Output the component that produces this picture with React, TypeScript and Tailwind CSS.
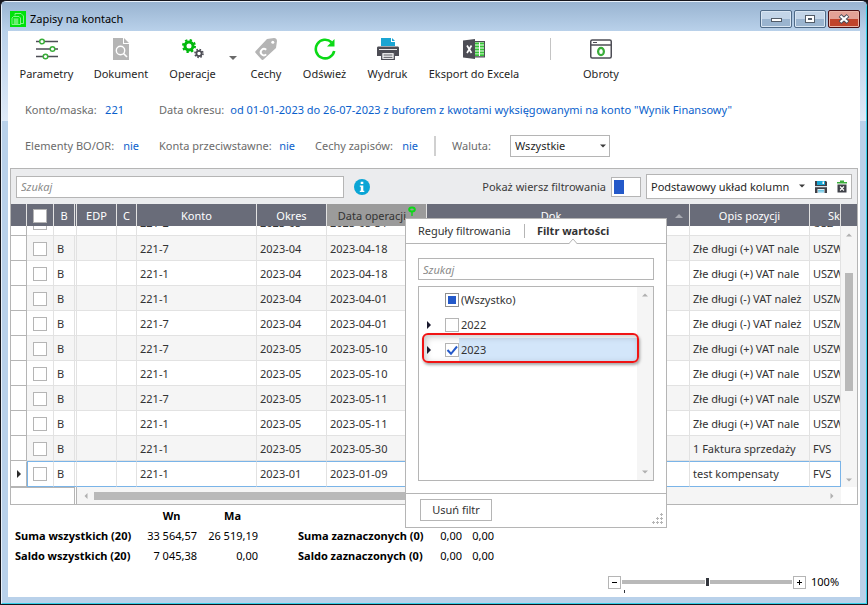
import { useState } from 'react'
import type { ReactNode } from 'react'
import clsx from 'clsx'

type Row = {
  konto: string
  okres: string
  data: string
  opis: string
  sk: string
}

const VAT_PLUS = 'Złe długi (+) VAT nale'
const VAT_MINUS = 'Złe długi (-) VAT należ'

const rows: Row[] = [
  { konto: '221-7', okres: '2023-04', data: '2023-04-18', opis: VAT_PLUS, sk: 'USZW' },
  { konto: '221-1', okres: '2023-04', data: '2023-04-18', opis: VAT_PLUS, sk: 'USZW' },
  { konto: '221-1', okres: '2023-04', data: '2023-04-01', opis: VAT_MINUS, sk: 'USZM' },
  { konto: '221-7', okres: '2023-04', data: '2023-04-01', opis: VAT_MINUS, sk: 'USZM' },
  { konto: '221-7', okres: '2023-05', data: '2023-05-10', opis: VAT_PLUS, sk: 'USZW' },
  { konto: '221-1', okres: '2023-05', data: '2023-05-10', opis: VAT_PLUS, sk: 'USZW' },
  { konto: '221-7', okres: '2023-05', data: '2023-05-11', opis: VAT_PLUS, sk: 'USZW' },
  { konto: '221-1', okres: '2023-05', data: '2023-05-11', opis: VAT_PLUS, sk: 'USZW' },
  { konto: '221-1', okres: '2023-05', data: '2023-05-30', opis: '1 Faktura sprzedaży', sk: 'FVS' },
  { konto: '221-1', okres: '2023-01', data: '2023-01-09', opis: 'test kompensaty', sk: 'FVS' },
]

function Arrow({ dir, className }: { dir: 'up' | 'down' | 'left' | 'right'; className?: string }) {
  const d = {
    up: 'M0 6 L4 2 L8 6Z',
    down: 'M0 2 L8 2 L4 6Z',
    left: 'M6 0 L6 8 L2 4Z',
    right: 'M2 0 L6 4 L2 8Z',
  }[dir]
  return (
    <svg viewBox="0 0 8 8" className={clsx('shrink-0', className)} fill="currentColor" aria-hidden="true">
      <path d={d} />
    </svg>
  )
}

function LogoIcon() {
  return (
    <svg viewBox="0 0 16 16" className="w-4 h-4 shrink-0" aria-hidden="true">
      <rect width="16" height="16" fill="#00e10b" />
      <g fill="none" stroke="#a5f7a8" strokeWidth="0.8">
        <path d="M5 4.5V2.5h6l2.5 2.5v7.5h-3" />
        <path d="M2 7l1.5-1.5H9L10.5 7v6.5H2z" />
        <path d="M3.5 8h5M3.5 10h5M3.5 12h5M5 8v5M7 8v5" />
      </g>
    </svg>
  )
}

function SlidersIcon() {
  return (
    <svg viewBox="0 0 22 22" className="w-[22px] h-[22px]" fill="none" aria-hidden="true">
      <path d="M0 3.5h22M0 11h22M0 18.5h22" stroke="#4d4d55" strokeWidth="1.4" />
      <g fill="#fff" stroke="#3aad3a" strokeWidth="1.5">
        <circle cx="6" cy="3.5" r="2.3" />
        <circle cx="16.5" cy="11" r="2.3" />
        <circle cx="9.5" cy="18.5" r="2.3" />
      </g>
    </svg>
  )
}

function DocumentIcon() {
  return (
    <svg viewBox="0 0 22 22" className="w-[22px] h-[22px]" aria-hidden="true">
      <path d="M3 0h10v6h6v16H3z" fill="#b5b5b5" />
      <path d="M14 0l5 5h-5z" fill="#b5b5b5" />
      <circle cx="10.5" cy="12.5" r="4.2" fill="none" stroke="#fff" strokeWidth="1.4" />
      <path d="M13.5 15.5l3.5 3.5" stroke="#fff" strokeWidth="1.6" />
    </svg>
  )
}

function GearsIcon() {
  return (
    <svg viewBox="0 0 22 22" className="w-[22px] h-[22px]" fill="none" aria-hidden="true">
      <circle cx="7" cy="8" r="4" stroke="#00b80c" strokeWidth="3" />
      <circle cx="7" cy="8" r="5.9" stroke="#00b80c" strokeWidth="2.2" strokeDasharray="2.3 2.33" />
      <circle cx="17" cy="15.5" r="2.6" stroke="#4d4d55" strokeWidth="1.8" />
      <circle cx="17" cy="15.5" r="4" stroke="#4d4d55" strokeWidth="1.6" strokeDasharray="1.57 1.57" />
    </svg>
  )
}

function TagIcon() {
  return (
    <svg viewBox="0 0 22 22" className="w-[22px] h-[22px]" aria-hidden="true">
      <path d="M12 1l7-1c1.8 0 3 1.2 3 3l-1 7L8.5 21.5c-.7.7-1.3.7-2 0L.7 15c-.7-.7-.7-1.3 0-2z" fill="#b5b5b5" />
      <circle cx="17.8" cy="4.2" r="1.5" fill="#fff" />
      <path d="M11.2 11.8a3.2 3.2 0 1 0 0 4.6" fill="none" stroke="#fff" strokeWidth="1.9" />
    </svg>
  )
}

function RefreshIcon() {
  return (
    <svg viewBox="0 0 22 22" className="w-[22px] h-[22px]" fill="none" aria-hidden="true">
      <path d="M17.5 4.3A9.3 9.3 0 1 0 20.2 13" stroke="#0bd916" strokeWidth="2.6" />
      <path d="M20.500 1v7.500h-7.500z" fill="#0bd916" />
    </svg>
  )
}

function PrinterIcon() {
  return (
    <svg viewBox="0 0 22 22" className="w-[22px] h-[22px]" aria-hidden="true">
      <path d="M4 0h10v4h4v4H4z" fill="#1aa5d3" />
      <path d="M15 0l3 3h-3z" fill="#1aa5d3" />
      <path d="M1.5 8.5h19c1 0 1.5.5 1.5 1.5v8h-4v-4H4v4H0v-8c0-1 .5-1.5 1.5-1.5z" fill="#4d4d55" />
      <path d="M2 11.5h18" stroke="#fff" strokeWidth="0.9" />
      <rect x="4.7" y="14.5" width="12.6" height="7" fill="#fff" stroke="#4d4d55" strokeWidth="1.3" />
      <path d="M6.5 17h9M6.5 19.3h9" stroke="#4d4d55" />
    </svg>
  )
}

function ExcelIcon() {
  return (
    <svg viewBox="0 0 22 22" className="w-[22px] h-[22px]" aria-hidden="true">
      <rect x="11" y="3" width="11" height="16.5" fill="#4d4d55" />
      <rect x="12" y="4.2" width="9" height="14" fill="#fff" />
      <path
        d="M12 4.500h4v2h-4zM17 4.500h4v2h-4zM12 7.500h4v2h-4zM17 7.500h4v2h-4zM12 10.500h4v2h-4zM17 10.500h4v2h-4zM12 13.500h4v2h-4zM17 13.500h4v2h-4zM12 16.300h4v1.700h-4zM17 16.300h4v1.700h-4z"
        fill="#35c435"
      />
      <path d="M0 2.5L12 1v20L0 19.5z" fill="#4d4d55" />
      <path d="M4 7.5l4.5 7.5M8.500 7.500L4 15" stroke="#fff" strokeWidth="1.7" />
    </svg>
  )
}

function TurnoverIcon() {
  return (
    <svg viewBox="0 0 22 22" className="w-[22px] h-[22px]" fill="none" aria-hidden="true">
      <rect x="0.75" y="2" width="20.5" height="18" rx="1.5" stroke="#4d4d55" strokeWidth="1.5" />
      <path d="M1 7h20" stroke="#4d4d55" strokeWidth="1.3" />
      <path d="M3 4.5h4" stroke="#4d4d55" strokeWidth="1.2" />
      <ellipse cx="11" cy="13.5" rx="2.9" ry="3.6" stroke="#3aad3a" strokeWidth="2.2" />
    </svg>
  )
}

function SaveIcon() {
  return (
    <svg viewBox="0 0 12 12" className="w-3 h-3" aria-hidden="true">
      <path d="M0 0h11l1 1v11H0z" fill="#3f4148" />
      <path d="M2 0h8v4H2z" fill="#1aa5d3" />
      <path d="M7.5 0.500h1.500v2.500H7.500z" fill="#fff" />
      <path d="M0 5h12v1.300H0z" fill="#dfe5ea" />
      <path d="M2.500 8h7v4h-7z" fill="#fff" />
      <path d="M3 9.300h6M3 10.900h6" stroke="#1aa5d3" strokeWidth="0.8" />
    </svg>
  )
}

function TrashIcon() {
  return (
    <svg viewBox="0 0 10 13" className="w-2.5 h-[13px]" aria-hidden="true">
      <path d="M0 3.500V2h3V0.500h4V2h3v1.500z" fill="#3aad3a" />
      <path d="M0.500 4.500h9V12.500h-9z" fill="#3f4148" />
      <path d="M3 6.500l4 4M7 6.500l-4 4" stroke="#fff" strokeWidth="1.1" />
    </svg>
  )
}

function ToolButton({ label, width, children }: { label: string; width: string; children: ReactNode }) {
  return (
    <button className={clsx('flex flex-col items-center gap-1.5 whitespace-nowrap', width)}>
      {children}
      <span>{label}</span>
    </button>
  )
}

function Param({ label, value, className }: { label: string; value: string; className?: string }) {
  return (
    <div className={clsx('flex justify-between whitespace-nowrap', className)}>
      <span className="text-[#6b6b6b]">{label}</span>
      <a href="#" className="text-[#0a5fcc]">{value}</a>
    </div>
  )
}

function Titlebar() {
  const glass =
    'flex items-center justify-center w-8 h-[18px] rounded-xs border border-[#4f6a87] bg-linear-to-b from-[#c3d5e8] from-50% to-[#9ab4cf] to-50% inset-ring inset-ring-[#d9e6f3]'
  return (
    <header className="flex items-center gap-1 h-[29px] pl-2 pr-0.5 pt-1 bg-linear-to-b from-[#99b4d1] to-[#b9d1ea]">
      <LogoIcon />
      <h1 className="flex-1 text-black">Zapisy na kontach</h1>
      <div className="flex gap-0.5 mr-1">
        <button aria-label="Minimalizuj" className={glass}>
          <span className="w-[11px] h-1 mt-0.5 border border-[#525c68] bg-white" />
        </button>
        <button aria-label="Maksymalizuj" className={glass}>
          <span className="flex items-center justify-center w-2.5 h-2 border border-[#525c68] bg-white">
            <span className="w-1 h-0.5 border border-[#525c68]" />
          </span>
        </button>
        <button
          aria-label="Zamknij"
          className="flex items-center justify-center w-8 h-[18px] rounded-xs border border-[#4b1015] bg-linear-to-b from-[#e3a196] from-50% to-[#c0442c] to-50% inset-ring inset-ring-[#eab5a8]"
        >
          <svg viewBox="0 0 12 10" className="w-3 h-2.5" aria-hidden="true">
            <path d="M2 1.500l8 7M10 1.500l-8 7" stroke="#4a4f5c" strokeWidth="4" />
            <path d="M2.500 2l7 6M9.500 2l-7 6" stroke="#fff" strokeWidth="2.2" />
          </svg>
        </button>
      </div>
    </header>
  )
}

function Toolbar() {
  return (
    <nav className="flex items-start gap-5 pl-3 pt-[7px] text-[#1f1f1f]">
      <ToolButton label="Parametry" width="w-[53px]"><SlidersIcon /></ToolButton>
      <ToolButton label="Dokument" width="w-14"><DocumentIcon /></ToolButton>
      <div className="flex">
        <ToolButton label="Operacje" width="w-[47px]"><GearsIcon /></ToolButton>
        <button aria-label="Więcej operacji" className="w-[14px] ml-2.5 -mr-2.5 pt-4 flex justify-center text-[#6a6a6a]">
          <Arrow dir="down" className="w-2 h-2" />
        </button>
      </div>
      <ToolButton label="Cechy" width="w-8"><TagIcon /></ToolButton>
      <ToolButton label="Odśwież" width="w-[45px]"><RefreshIcon /></ToolButton>
      <ToolButton label="Wydruk" width="w-[41px]"><PrinterIcon /></ToolButton>
      <ToolButton label="Eksport do Excela" width="w-[92px]"><ExcelIcon /></ToolButton>
      <div className="w-px h-[22px] mx-2.5 bg-[#c4c4c4]" />
      <ToolButton label="Obroty" width="w-10"><TurnoverIcon /></ToolButton>
    </nav>
  )
}

function Params() {
  return (
    <div className="flex flex-col gap-4 pl-[17px] pt-[18px] pb-3">
      <div className="flex items-center gap-[35px] h-5">
        <Param label="Konto/maska:" value="221" className="w-[99px]" />
        <Param
          label="Data okresu:"
          value={'od 01-01-2023 do 26-07-2023 z buforem z kwotami wyksięgowanymi na konto "Wynik Finansowy"'}
          className="gap-1.5"
        />
      </div>
      <div className="flex items-center h-5">
        <Param label="Elementy BO/OR:" value="nie" className="w-[114px] mr-5" />
        <Param label="Konta przeciwstawne:" value="nie" className="w-[136px] mr-5" />
        <Param label="Cechy zapisów:" value="nie" className="w-[103px]" />
        <div className="w-0.5 h-5 mx-4 bg-[#d0d0d0]" />
        <label htmlFor="waluta" className="w-[58px] text-[#6b6b6b]">Waluta:</label>
        <div className="relative">
          <select id="waluta" className="w-[100px] h-[22px] pl-1 appearance-none border border-[#b5b5b5] bg-white text-[#1f1f1f]">
            <option>Wszystkie</option>
          </select>
          <Arrow dir="down" className="absolute right-1 top-2 w-1.5 h-1.5 pointer-events-none text-[#3b3b3b]" />
        </div>
      </div>
    </div>
  )
}

function GridSearch() {
  return (
    <div className="flex items-center h-[35px] px-[5px] bg-[#ebecee]">
      <input
        type="search"
        aria-label="Szukaj"
        placeholder="Szukaj"
        className="w-[328px] h-[22px] px-1 border border-[#b5b5b5] bg-white italic placeholder:text-[#8a8a8a]"
      />
      <button aria-label="Informacje" className="ml-2.5">
        <svg viewBox="0 0 16 16" className="w-4 h-4" aria-hidden="true">
          <circle cx="8" cy="8" r="8" fill="#0aa5d5" />
          <path d="M6.700 2.800h2.600v2.200H6.700zM5.800 6.500h3.500v5.200h1V13H5.800v-1.300h1V7.800h-1z" fill="#fff" />
        </svg>
      </button>
      <div className="flex items-center gap-[5px] ml-auto">
        <label htmlFor="filter-row" className="text-[#3b3b3b]">Pokaż wiersz filtrowania</label>
        <input
          id="filter-row"
          type="checkbox"
          role="switch"
          className="w-[30px] h-5 p-0.5 appearance-none border border-[#b5b5b5] bg-white bg-linear-to-r from-[#2459c9] from-40% to-white to-40% bg-clip-content bg-origin-content inset-ring-2 inset-ring-white"
        />
        <div className="flex items-center w-[206px] h-[25px] border border-[#b5b5b5] bg-white">
          <div className="relative flex-1">
            <select aria-label="Układ kolumn" className="w-full h-5 pl-1 appearance-none text-[#1f1f1f]">
              <option>Podstawowy układ kolumn</option>
            </select>
            <Arrow dir="down" className="absolute right-1 top-1.5 w-1.5 h-1.5 pointer-events-none text-[#3b3b3b]" />
          </div>
          <button aria-label="Zapisz układ" className="ml-1.5"><SaveIcon /></button>
          <button aria-label="Usuń układ" className="ml-2.5 mr-1"><TrashIcon /></button>
        </div>
      </div>
    </div>
  )
}

const box = 'block appearance-none border border-[#b5b5b5] bg-white'

// The row scrolled halfway under the header, only its lower edge shows
function ClippedCell({ children, className }: { children?: ReactNode; className?: string }) {
  return (
    <td className="h-[10px] p-0 border-r border-b border-[#e2e2e2]">
      <div className={clsx('flex items-end h-[9px] overflow-hidden', className)}>{children}</div>
    </td>
  )
}

function EntriesTable() {
  return (
    <table className="table-fixed border-separate border-spacing-0 whitespace-nowrap w-full">
      <colgroup>
        <col className="w-4" />
        <col className="w-[27px]" />
        <col className="w-[23px]" />
        <col className="w-10" />
        <col className="w-5" />
        <col className="w-[120px]" />
        <col className="w-[70px]" />
        <col className="w-[100px]" />
        <col />
        <col className="w-[120px]" />
        <col className="w-[31px]" />
      </colgroup>
      <thead>
        <tr className="bg-[#696c79] text-white *:h-[22px] *:p-0 *:pt-0.5 *:font-normal *:border-r *:border-[#e2e2e2] *:overflow-hidden">
          <th />
          <th><input type="checkbox" aria-label="Zaznacz wszystkie" className={clsx(box, 'w-3.5 h-3.5 mx-auto')} /></th>
          <th className="pt-0!"><div className="h-[22px] pt-px leading-[22px] border-r border-[#e2e2e2] mr-px">B</div></th>
          <th>EDP</th>
          <th>C</th>
          <th>Konto</th>
          <th>Okres</th>
          <th className="bg-[#9b9b9b] text-[#333333] pt-0!">
            <div className="flex h-[22px] justify-end gap-0.5 pr-2.5">
              <span className="pt-1">Data operacji</span>
              <svg viewBox="0 0 8 10" className="w-2 h-2.5 mt-0.5" aria-hidden="true">
                <ellipse cx="4" cy="3.5" rx="2.800" ry="2" fill="none" stroke="#0bd916" strokeWidth="2" />
                <path d="M4 5v5" stroke="#0bd916" strokeWidth="1.4" />
              </svg>
            </div>
          </th>
          <th>
            <div className="flex items-center pr-1.5">
              <span className="flex-1">Dok</span>
              <Arrow dir="up" className="w-2 h-2 text-[#a9abb3]" />
            </div>
          </th>
          <th>Opis pozycji</th>
          <th className="text-right">Sk</th>
        </tr>
      </thead>
      <tbody className="text-[#333333]">
        <tr>
          <td className="h-[10px] p-0 border-r border-b border-[#b5b5b5]" />
          <ClippedCell className="pl-1.5 pb-[5px]"><span className="w-3.5 h-3.5 border border-[#b5b5b5] shrink-0" /></ClippedCell>
          <ClippedCell className="pl-[3px] pb-1.5">B</ClippedCell>
          <ClippedCell />
          <ClippedCell />
          <ClippedCell className="pl-[3px] pb-1">221-2</ClippedCell>
          <ClippedCell className="pl-[3px] pb-1">2023-05</ClippedCell>
          <ClippedCell className="pl-[3px] pb-1">2023-05-31</ClippedCell>
          <ClippedCell />
          <ClippedCell />
          <ClippedCell className="pl-[3px] pb-1">USZ</ClippedCell>
        </tr>
        {rows.map((row, i) => {
          const current = i === rows.length - 1
          return (
            <tr
              key={i}
              className={clsx(
                '*:h-[25px] *:py-0 *:px-[3px] *:border-r *:border-b *:overflow-hidden *:border-r-[#e2e2e2]',
                current
                  ? 'bg-white *:border-t *:border-t-[#7ab4e8] *:border-b-[#7ab4e8] *:last:border-r-[#7ab4e8] *:nth-2:border-l *:nth-2:border-l-[#7ab4e8]'
                  : '*:pt-0.5 *:border-b-[#e2e2e2]',
                !current && i % 2 === 0 && 'bg-[#f5f5f5]',
              )}
            >
              <td className="bg-white border-t-transparent! border-[#b5b5b5]!">
                {current && <Arrow dir="right" className="w-2 h-2 ml-px text-[#2a2a2a]" />}
              </td>
              <td>
                <input
                  type="checkbox"
                  aria-label={`Zaznacz ${row.konto} ${row.data}`}
                  className={clsx(box, 'w-3.5 h-3.5', current ? 'ml-0.5' : 'ml-[3px]')}
                />
              </td>
              <td className="pt-0!">
                <div className={clsx('h-6 border-r border-[#e2e2e2] -mr-0.5', current ? 'leading-6' : 'leading-[26px]')}>B</div>
              </td>
              <td />
              <td />
              <td>{row.konto}</td>
              <td>{row.okres}</td>
              <td>{row.data}</td>
              <td />
              <td>{row.opis}</td>
              <td>{row.sk}</td>
            </tr>
          )
        })}
      </tbody>
    </table>
  )
}

function FilterPopup() {
  return (
    <div
      role="dialog"
      aria-label="Filtr kolumny"
      className="absolute left-[394px] top-[49px] w-[262px] border border-[#b5b5b5] bg-white text-[#333333]"
    >
      <div className="relative flex items-center h-[25px] pl-3 border-b border-[#b5b5b5] whitespace-nowrap">
        <button className="w-[95px] text-left">Reguły filtrowania</button>
        <div className="w-px h-3.5 ml-[11px] mr-3 bg-[#b5b5b5]" />
        <button className="font-bold">Filtr wartości</button>
        <svg viewBox="0 0 8 6" className="absolute left-[163px] -bottom-px w-2 h-1.5" aria-hidden="true">
          <path d="M0 6l4-5 4 5z" fill="#fff" />
          <path d="M0 5.500l4-4.500 4 4.500" fill="none" stroke="#b5b5b5" />
        </svg>
      </div>
      <div className="flex flex-col gap-1.5 px-3 pt-3.5 pb-3">
        <input
          type="search"
          aria-label="Szukaj wartości"
          placeholder="Szukaj"
          className="w-full h-[22px] px-1 border border-[#b5b5b5] italic placeholder:text-[#8a8a8a]"
        />
        <div className="flex h-[195px] border border-[#b5b5b5]">
          <ul className="flex-1">
            <li className="flex items-center h-[25px] pl-[26px] gap-0.5">
              <button
                id="all"
                role="checkbox"
                aria-checked="mixed"
                aria-label="Wszystko"
                className="w-3.5 h-3.5 border border-[#8f8f8f] bg-[#2459c9] inset-ring-2 inset-ring-white"
              />
              <label htmlFor="all">(Wszystko)</label>
            </li>
            <li className="flex items-center h-[25px] pl-1.5">
              <button aria-label="Rozwiń 2022" className="w-5 text-[#1a1a2e]"><Arrow dir="right" className="w-2 h-2" /></button>
              <input id="y2022" type="checkbox" className={clsx(box, 'w-3.5 h-3.5 mr-0.5')} />
              <label htmlFor="y2022">2022</label>
            </li>
            <li className="relative flex items-center h-[25px] pl-1.5">
              <button aria-label="Rozwiń 2023" className="w-5 text-[#1a1a2e]"><Arrow dir="right" className="w-2 h-2" /></button>
              <span className="relative">
                <input id="y2023" type="checkbox" defaultChecked className={clsx(box, 'w-3.5 h-3.5')} />
                <svg viewBox="0 0 14 14" className="absolute inset-0 w-3.5 h-3.5 pointer-events-none" aria-hidden="true">
                  <path d="M2.500 7l3.500 3.800 6-7.300" fill="none" stroke="#2459c9" strokeWidth="2" />
                </svg>
              </span>
              <label htmlFor="y2023" className="flex-1 h-6 pl-0.5 leading-6 bg-[#d3e6fa]">2023</label>
              <span className="absolute left-[3px] -right-0.5 -top-1 -bottom-px border-2 border-[#f01414] rounded-md shadow-[1px_2px_3px_rgba(0,0,0,0.35),inset_2px_2px_6px_rgba(0,0,0,0.22)] pointer-events-none" />
            </li>
          </ul>
          <div className="flex flex-col items-center justify-between w-4 py-1 bg-[#f5f5f5] text-[#b0b0b0]">
            <Arrow dir="up" className="w-1.5 h-1.5 mt-px" />
            <Arrow dir="down" className="w-1.5 h-1.5 mb-px" />
          </div>
        </div>
      </div>
      <div className="flex items-start justify-between h-[34px] pl-3.5 pt-[5px] border-t border-[#b5b5b5]">
        <button className="w-[72px] h-[22px] border border-[#b5b5b5]">Usuń filtr</button>
        <svg viewBox="0 0 12 12" className="w-3 h-3 self-end mr-0.5 mb-0.5" fill="#b5b5b5" aria-hidden="true">
          <path d="M8 1h3v1H8zM9 0h1v3H9zM8 5h3v1H8zM9 4h1v3H9zM4 5h3v1H4zM5 4h1v3H5zM8 9h3v1H8zM9 8h1v3H9zM4 9h3v1H4zM5 8h1v3H5zM0 9h3v1H0zM1 8h1v3H1z" />
        </svg>
      </div>
    </div>
  )
}

function Grid() {
  return (
    <section className="relative mx-0.5 border border-[#b5b5b5]">
      <GridSearch />
      <div className="flex">
        <div className="flex-1 min-w-0"><EntriesTable /></div>
        <div className="flex flex-col w-4">
          <div className="h-[22px] bg-[#696c79]" />
          <div className="flex flex-1 flex-col items-center pt-1.5 pb-1 bg-[#f5f5f5] text-[#b0b0b0]">
            <Arrow dir="up" className="w-1.5 h-1.5" />
            <div className="w-2 h-[118px] mt-[35px] bg-[#b9b9b9]" />
            <Arrow dir="down" className="w-1.5 h-1.5 mt-auto" />
          </div>
        </div>
      </div>
      <div className="flex h-[17px]">
        <div className="w-[66px] pr-px border-r border-[#b5b5b5]">
          <div className="h-full border-t border-r border-[#b5b5b5]" />
        </div>
        <div className="flex flex-1 items-center px-1.5 bg-[#f5f5f5] text-[#b0b0b0]">
          <Arrow dir="left" className="w-1.5 h-1.5" />
          <div className="h-2 w-1/2 ml-[5px] bg-[#b9b9b9]" />
          <Arrow dir="right" className="w-1.5 h-1.5 ml-auto" />
        </div>
        <div className="w-4 bg-white" />
      </div>
      <FilterPopup />
    </section>
  )
}

function Totals() {
  return (
    <div className="flex items-end gap-[39px] pl-[7px] pt-px text-black">
      <table className="table-fixed w-[243px] whitespace-nowrap leading-5 *:*:*:p-0">
        <thead>
          <tr>
            <td className="w-[121px]" />
            <th className="w-[61px] pl-2.5! text-center">Wn</th>
            <th className="pl-2.5! text-center">Ma</th>
          </tr>
        </thead>
        <tbody>
          <tr>
            <th className="text-left">Suma wszystkich (20)</th>
            <td className="text-right">33 564,57</td>
            <td className="text-right">26 519,19</td>
          </tr>
          <tr>
            <th className="text-left">Saldo wszystkich (20)</th>
            <td className="text-right">7 045,38</td>
            <td className="text-right">0,00</td>
          </tr>
        </tbody>
      </table>
      <table className="table-fixed w-[196px] ml-px whitespace-nowrap leading-5">
        <tbody>
          <tr>
            <th className="w-[132px] p-0 text-left">Suma zaznaczonych (0)</th>
            <td className="p-0 text-right">0,00</td>
            <td className="p-0 text-right">0,00</td>
          </tr>
          <tr>
            <th className="p-0 text-left">Saldo zaznaczonych (0)</th>
            <td className="p-0 text-right">0,00</td>
            <td className="p-0 text-right">0,00</td>
          </tr>
        </tbody>
      </table>
    </div>
  )
}

function ZoomBar() {
  const [zoom, setZoom] = useState(100)
  const step = 'flex items-center justify-center w-[13px] h-[13px] border border-[#b5b5b5]'
  return (
    <footer className="flex items-center justify-end mt-auto pr-5 pb-[7px] text-black">
      <button aria-label="Pomniejsz" className={step} onClick={() => setZoom(z => Math.max(0, z - 10))}>
        <span className="w-[5px] h-px bg-black" />
      </button>
      <div className="relative flex mx-px">
        <input
          type="range"
          aria-label="Powiększenie"
          min={0}
          max={200}
          value={zoom}
          onChange={e => setZoom(Number(e.target.value))}
          className="w-[170px] h-1 appearance-none bg-[#b9b9b9] [&::-webkit-slider-thumb]:appearance-none [&::-webkit-slider-thumb]:w-[5px] [&::-webkit-slider-thumb]:h-2 [&::-webkit-slider-thumb]:bg-[#33363d] [&::-webkit-slider-thumb]:border-r [&::-webkit-slider-thumb]:border-l [&::-webkit-slider-thumb]:border-white"
        />
        <span className="absolute left-0.5 top-2.5 w-px h-[3px] bg-[#33363d]" />
      </div>
      <button aria-label="Powiększ" className={step} onClick={() => setZoom(z => Math.min(200, z + 10))}>
        <svg viewBox="0 0 5 5" className="w-[5px] h-[5px]" aria-hidden="true">
          <path d="M2 0h1v2h2v1H3v2H2V3H0V2h2z" />
        </svg>
      </button>
      <output className="w-[29px] ml-[5px]">{zoom}%</output>
    </footer>
  )
}

export default function App() {
  const side =
    'w-1.5 bg-[#b9d1ea] bg-[linear-gradient(#b9d1ea,#dfeaf8)] bg-[length:100%_90px] bg-no-repeat'
  return (
    <div className="bg-[#16161c]">
      <div className="flex flex-col min-h-screen rounded-t-md border border-[#16161c] bg-[#b9d1ea] font-['Noto_Sans','Segoe_UI',sans-serif] text-[11px] leading-4 overflow-hidden">
        <div className="flex flex-1 flex-col border border-t-[#e9f1fa] border-l-[#e9f1fa] border-r-[#35d0ea] border-b-[#35d0ea] rounded-t-md">
          <Titlebar />
          <div className="flex flex-1">
            <div className={side} />
            <main className="flex flex-1 min-w-0 flex-col bg-white">
              <Toolbar />
              <Params />
              <Grid />
              <Totals />
              <ZoomBar />
            </main>
            <div className={side} />
          </div>
          <div className="h-1.5" />
        </div>
      </div>
    </div>
  )
}
